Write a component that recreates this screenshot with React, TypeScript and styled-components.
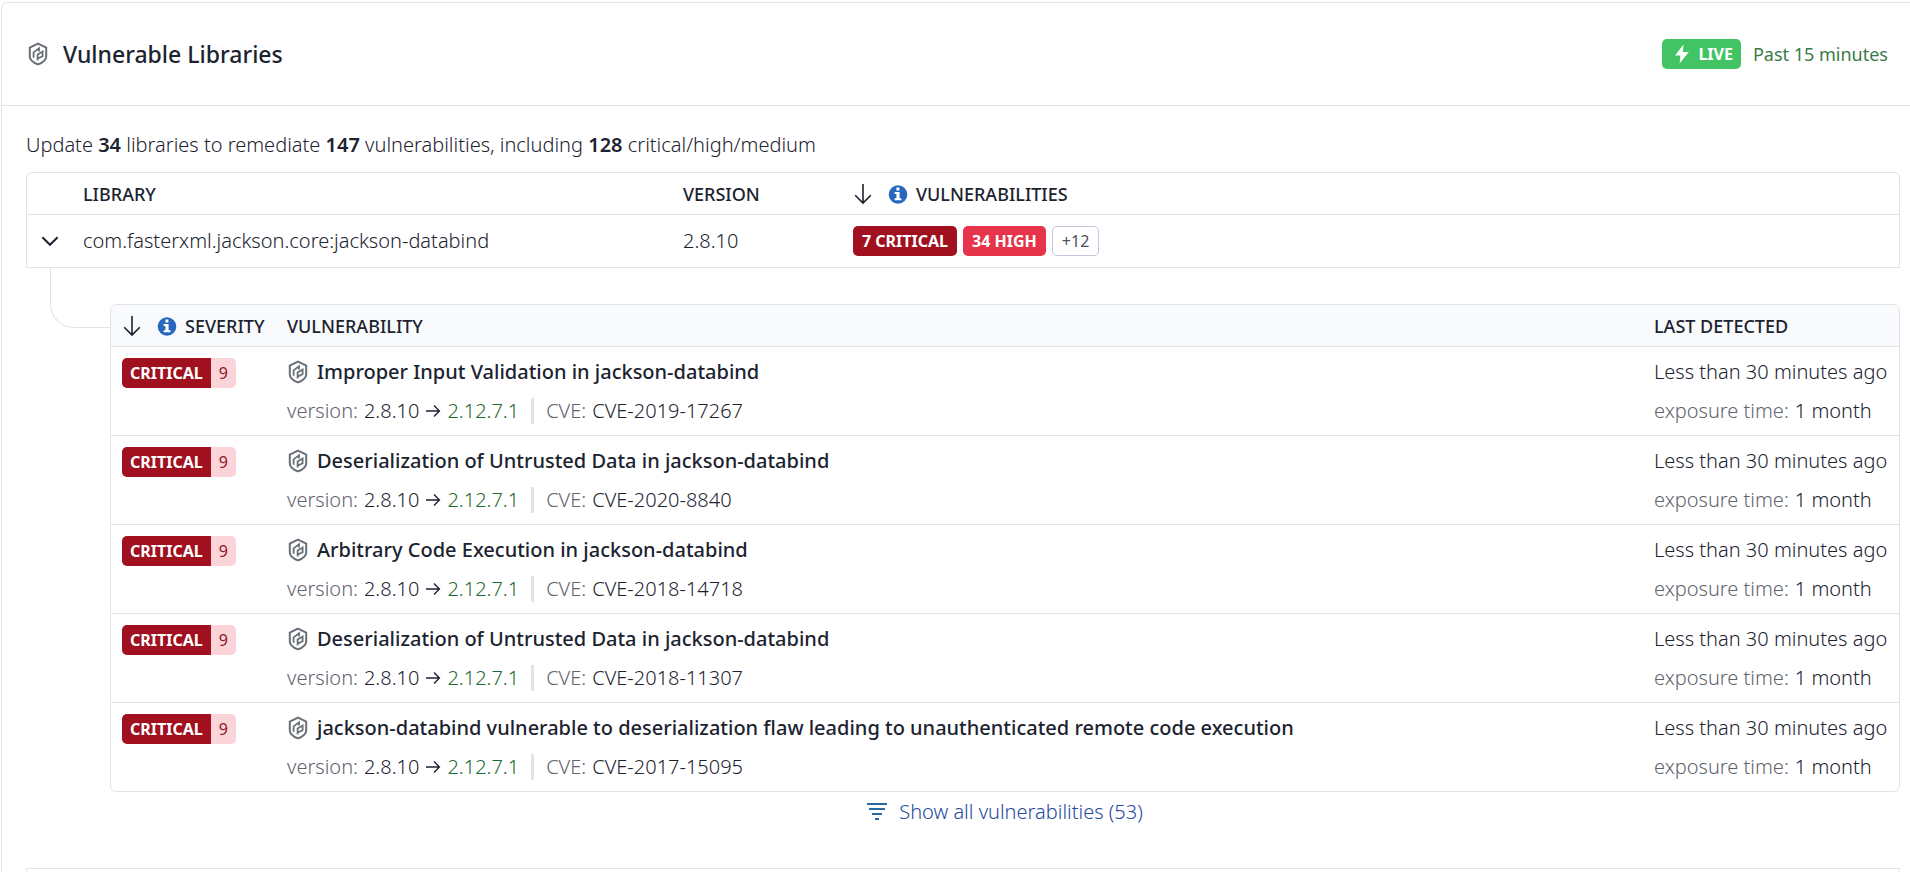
import React from "react";
import styled, { createGlobalStyle, css } from "styled-components";

const GlobalStyle = createGlobalStyle`
  *, *::before, *::after { box-sizing: border-box; }
  body {
    margin: 0;
    background: #ffffff;
    color: #1c2330;
    font-family: "Noto Sans", "Open Sans", sans-serif;
    font-size: 20px;
    font-weight: 300;
    line-height: 28px;
  }
`;

const line = "#e2e3ea";

const Card = styled.main`
  margin: 2px 0 0 1px;
  border: 1px solid ${line};
  border-right: 0;
  border-bottom: 0;
  border-top-left-radius: 6px;
`;

const CardHeader = styled.header`
  display: flex;
  align-items: center;
  justify-content: space-between;
  height: 103px;
  padding: 0 22px 0 26px;
  border-bottom: 1px solid ${line};
`;

const HeaderGroup = styled.div<{ $gap: number }>`
  display: flex;
  align-items: center;
  gap: ${(p) => p.$gap}px;
`;

const Title = styled.h1`
  margin: 0;
  font-size: 23px;
  font-weight: 500;
  line-height: 30px;
`;

const LiveBadge = styled.span`
  display: flex;
  align-items: center;
  gap: 8px;
  height: 30px;
  padding: 0 8px 0 12px;
  border-radius: 5px;
  background: #42c464;
  color: #ffffff;
  font-size: 16px;
  font-weight: 700;
`;

const LiveRange = styled.span`
  color: #3b7a47;
  font-size: 18px;
  font-weight: 400;
`;

const CardBody = styled.div`
  padding: 25px 10px 0 24px;
`;

const Summary = styled.p`
  margin: 0 0 13px;
  b { font-weight: 600; }
`;

const LibraryTable = styled.table`
  width: 100%;
  border: 1px solid ${line};
  border-bottom: 0;
  border-radius: 6px 6px 0 0;
  border-spacing: 0;
  table-layout: fixed;
`;

const headText = css`
  font-size: 18px;
  font-weight: 500;
  text-align: left;
  white-space: nowrap;
`;

const LibraryHead = styled.th<{ $width?: number; $inset?: number }>`
  ${headText}
  width: ${(p) => (p.$width ? `${p.$width}px` : "auto")};
  height: 42px;
  padding: 0 0 0 ${(p) => p.$inset ?? 0}px;
  border-bottom: 1px solid ${line};
`;

const LibraryCell = styled.td`
  height: 53px;
  padding: 0;
  border-bottom: 1px solid ${line};
`;

const SortLabel = styled.span`
  display: flex;
  align-items: center;
  gap: 8px;
  svg:first-child { margin-right: 7px; }
`;

const ExpandButton = styled.button`
  display: flex;
  padding: 6px 14px;
  border: 0;
  background: none;
  color: inherit;
  cursor: pointer;
`;

const TagList = styled.div`
  display: flex;
  gap: 6px;
`;

const tones = {
  critical: css`background: #a0101e; color: #ffffff; font-weight: 700;`,
  high: css`background: #e6354b; color: #ffffff; font-weight: 700;`,
  more: css`border: 1px solid #c3c7da; color: #4a505c; font-weight: 400;`,
};

const Tag = styled.span<{ $tone: keyof typeof tones }>`
  display: flex;
  align-items: center;
  height: 30px;
  padding: 0 9px;
  border-radius: 5px;
  font-size: 16px;
  ${(p) => tones[p.$tone]}
`;

const Details = styled.section`
  display: flex;
  align-items: flex-start;
  padding-left: 24px;
`;

const Connector = styled.div`
  flex: 0 0 60px;
  height: 60px;
  border: solid ${line};
  border-width: 0 0 1px 1px;
  border-bottom-left-radius: 24px;
`;

const DetailsBody = styled.div`
  flex: 1;
  padding-top: 36px;
`;

const VulnerabilityTable = styled.table`
  width: 100%;
  border: 1px solid ${line};
  border-radius: 6px;
  border-spacing: 0;
  table-layout: fixed;
  overflow: hidden;

  tbody tr:last-child td { border-bottom: 0; }
`;

const VulnerabilityHead = styled.th<{ $width?: number; $inset?: number }>`
  ${headText}
  width: ${(p) => (p.$width ? `${p.$width}px` : "auto")};
  height: 42px;
  padding: 0 0 0 ${(p) => p.$inset ?? 0}px;
  border-bottom: 1px solid ${line};
  background: #f9fafc;
`;

const VulnerabilityCell = styled.td<{ $inset?: number }>`
  padding: 11px 0 10px ${(p) => p.$inset ?? 0}px;
  border-bottom: 1px solid ${line};
  vertical-align: top;
  white-space: nowrap;
`;

const SeverityBadge = styled.span`
  display: inline-flex;
  overflow: hidden;
  border-radius: 5px;
  font-size: 16px;
  line-height: 30px;
`;

const SeverityName = styled.span`
  padding: 0 8px;
  background: #a0101e;
  color: #ffffff;
  font-weight: 700;
`;

const SeverityScore = styled.span`
  padding: 0 8px;
  background: #fad4d9;
  color: #8c1626;
  font-weight: 400;
`;

const Line = styled.div`
  display: flex;
  align-items: center;
  height: 28px;
  & + & { margin-top: 11px; }
`;

const VulnerabilityName = styled.span`
  margin-left: 8px;
  font-weight: 500;
`;

const Muted = styled.span`
  margin-right: 6px;
  color: #60646d;
`;

const FixedVersion = styled.span`
  color: #1b6a33;
`;

const Divider = styled.span`
  width: 3px;
  height: 26px;
  margin: 0 12px;
  background: #e2e3ea;
`;

const ShowAll = styled.a`
  display: flex;
  align-items: center;
  justify-content: center;
  gap: 12px;
  padding-top: 6px;
  color: #264a9e;
  text-decoration: none;
`;

const NextRow = styled.div`
  height: 53px;
  margin-top: 42px;
  border: 1px solid ${line};
`;

const ShieldIcon = ({ width = 20 }: { width?: number }) => (
  <svg width={width} height={24} viewBox="0 0 20 24" fill="none" stroke="#6a6e77" strokeWidth="2" aria-hidden="true">
    <path d="M10 1.6 18.2 5.6V14.4C18.2 18.4 14 20.8 10 22.4C6 20.8 1.8 18.4 1.8 14.4V5.6Z" />
    <path strokeWidth="1.8" d="M5.6 15.8V10.4L11 6.4V9.4" />
    <path strokeWidth="1.8" d="M9.6 18.4V12.6L14.6 9.6V14.2L9.6 16.6" />
  </svg>
);

const SortArrow = () => (
  <svg width={20} height={22} viewBox="0 0 20 22" fill="none" stroke="currentColor" strokeWidth="1.6" aria-hidden="true">
    <path d="M10 1V20M2.2 12.2 10 20 17.8 12.2" />
  </svg>
);

const InfoIcon = () => (
  <svg width={20} height={20} viewBox="0 0 20 20" aria-hidden="true">
    <circle cx="10" cy="10.5" r="9.3" fill="#2867bf" />
    <path fill="#fff" d="M8.4 3.6H11.4V6.6H8.4ZM6.6 8H11.6V14.2H13.4V16.2H6.6V14.2H8.4V10H6.6Z" />
  </svg>
);

const Chevron = () => (
  <svg width={18} height={18} viewBox="0 0 18 18" fill="none" stroke="currentColor" strokeWidth="2" aria-hidden="true">
    <path d="M1.4 5.2 9 12.8 16.6 5.2" />
  </svg>
);

const Bolt = () => (
  <svg width={16} height={20} viewBox="0 0 16 20" fill="#fff" aria-hidden="true">
    <path d="M9.6 0.6 1 11.4H6.4L5.6 19.4 14.8 8H8.8Z" />
  </svg>
);

const ArrowRight = styled((props: { className?: string }) => (
  <svg className={props.className} width={16} height={14} viewBox="0 0 16 14" fill="none" stroke="currentColor" strokeWidth="1.4" aria-hidden="true">
    <path d="M1 7H14M9 1.6 14.4 7 9 12.4" />
  </svg>
))`
  margin: 0 6px;
`;

const FilterIcon = () => (
  <svg width={20} height={18} viewBox="0 0 20 18" fill="#2867a8" aria-hidden="true">
    <path d="M0 0H20V2H0ZM2 5H18V7H2ZM5 10H15V12H5ZM8 15H12V17H8Z" />
  </svg>
);

const vulnerabilities = [
  { name: "Improper Input Validation in jackson-databind", cve: "CVE-2019-17267" },
  { name: "Deserialization of Untrusted Data in jackson-databind", cve: "CVE-2020-8840" },
  { name: "Arbitrary Code Execution in jackson-databind", cve: "CVE-2018-14718" },
  { name: "Deserialization of Untrusted Data in jackson-databind", cve: "CVE-2018-11307" },
  {
    name: "jackson-databind vulnerable to deserialization flaw leading to unauthenticated remote code execution",
    cve: "CVE-2017-15095",
  },
];

export default function App() {
  return (
    <>
      <GlobalStyle />
      <Card>
        <CardHeader>
          <HeaderGroup $gap={15}>
            <ShieldIcon />
            <Title>Vulnerable Libraries</Title>
          </HeaderGroup>
          <HeaderGroup $gap={12}>
            <LiveBadge>
              <Bolt />
              LIVE
            </LiveBadge>
            <LiveRange>Past 15 minutes</LiveRange>
          </HeaderGroup>
        </CardHeader>
        <CardBody>
          <Summary>
            Update <b>34</b> libraries to remediate <b>147</b> vulnerabilities, including <b>128</b> critical/high/medium
          </Summary>
          <LibraryTable>
            <thead>
              <tr>
                <LibraryHead $width={56} aria-label="Expand" />
                <LibraryHead $width={600}>LIBRARY</LibraryHead>
                <LibraryHead $width={170}>VERSION</LibraryHead>
                <LibraryHead>
                  <SortLabel>
                    <SortArrow />
                    <InfoIcon />
                    VULNERABILITIES
                  </SortLabel>
                </LibraryHead>
              </tr>
            </thead>
            <tbody>
              <tr>
                <LibraryCell>
                  <ExpandButton type="button" aria-expanded="true" aria-label="Collapse library">
                    <Chevron />
                  </ExpandButton>
                </LibraryCell>
                <LibraryCell>com.fasterxml.jackson.core:jackson-databind</LibraryCell>
                <LibraryCell>2.8.10</LibraryCell>
                <LibraryCell>
                  <TagList>
                    <Tag $tone="critical">7 CRITICAL</Tag>
                    <Tag $tone="high">34 HIGH</Tag>
                    <Tag $tone="more">+12</Tag>
                  </TagList>
                </LibraryCell>
              </tr>
            </tbody>
          </LibraryTable>
          <Details>
            <Connector />
            <DetailsBody>
              <VulnerabilityTable>
                <thead>
                  <tr>
                    <VulnerabilityHead $width={176} $inset={11}>
                      <SortLabel>
                        <SortArrow />
                        <InfoIcon />
                        SEVERITY
                      </SortLabel>
                    </VulnerabilityHead>
                    <VulnerabilityHead>VULNERABILITY</VulnerabilityHead>
                    <VulnerabilityHead $width={245}>LAST DETECTED</VulnerabilityHead>
                  </tr>
                </thead>
                <tbody>
                  {vulnerabilities.map((v) => (
                    <tr key={v.cve}>
                      <VulnerabilityCell $inset={11}>
                        <SeverityBadge>
                          <SeverityName>CRITICAL</SeverityName>
                          <SeverityScore>9</SeverityScore>
                        </SeverityBadge>
                      </VulnerabilityCell>
                      <VulnerabilityCell>
                        <Line>
                          <ShieldIcon width={22} />
                          <VulnerabilityName>{v.name}</VulnerabilityName>
                        </Line>
                        <Line>
                          <Muted>version:</Muted>
                          <span>2.8.10</span>
                          <ArrowRight />
                          <FixedVersion>2.12.7.1</FixedVersion>
                          <Divider />
                          <Muted>CVE:</Muted>
                          <span>{v.cve}</span>
                        </Line>
                      </VulnerabilityCell>
                      <VulnerabilityCell>
                        <Line>Less than 30 minutes ago</Line>
                        <Line>
                          <Muted>exposure time:</Muted>
                          <span>1 month</span>
                        </Line>
                      </VulnerabilityCell>
                    </tr>
                  ))}
                </tbody>
              </VulnerabilityTable>
              <ShowAll href="#all">
                <FilterIcon />
                Show all vulnerabilities (53)
              </ShowAll>
            </DetailsBody>
          </Details>
          <NextRow />
        </CardBody>
      </Card>
    </>
  );
}
